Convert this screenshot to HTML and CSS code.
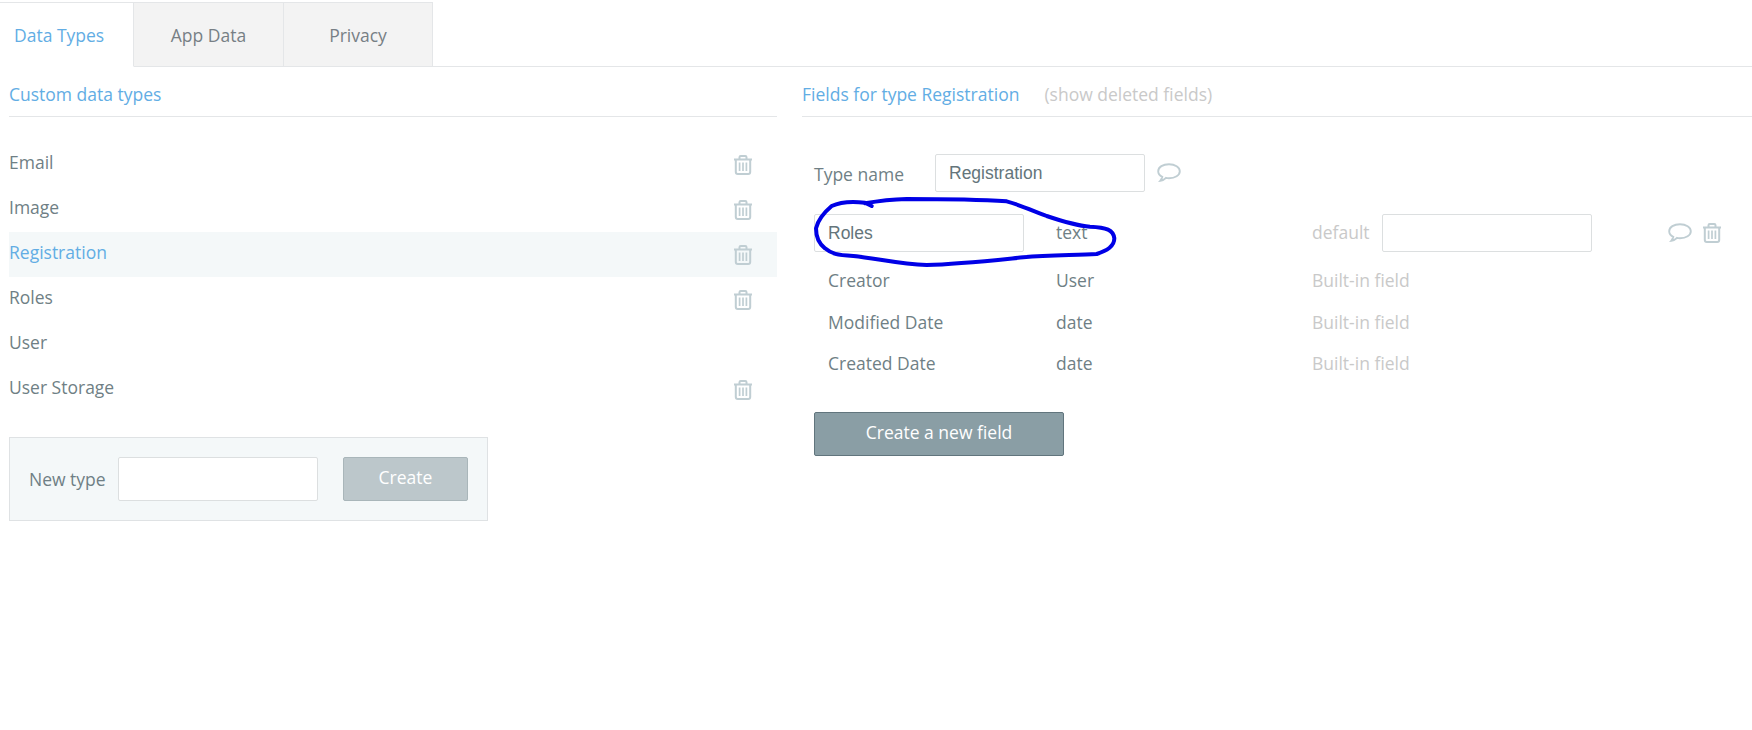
FILE: index.html
```html
<!DOCTYPE html>
<html lang="en">
<head>
<meta charset="utf-8">
<title>Data Types</title>
<link rel="stylesheet" href="styles.css">
</head>
<body>
<svg width="0" height="0" class="defs">
  <symbol id="trash" viewBox="0 0 18 20">
    <path d="M0 4.500h18M5.500 4.500V2.200Q5.500 1 6.700 1h4.600q1.200 0 1.200 1.200v2.300M1.800 4.500V17q0 2 2 2h10.400q2 0 2-2V4.500" fill="none" stroke="currentColor" stroke-width="2"/>
    <path d="M5.600 7.500v8.500M9 7.500v8.500M12.400 7.500v8.500" fill="none" stroke="currentColor" stroke-width="1.700"/>
  </symbol>
  <symbol id="comment" viewBox="0 0 24 20">
    <path d="M12 1.200C6 1.200 1.200 4.100 1.200 8.200c0 2.400 1.600 4.400 4.100 5.600-.3 1.500-1 2.800-2 4 2.300-.3 4.300-1.400 5.700-2.900 1 .2 2 .3 3 .3 6 0 10.800-3 10.800-7S18 1.200 12 1.200z" fill="none" stroke="currentColor" stroke-width="1.900"/>
  </symbol>
</svg>
<nav class="tabs">
  <div class="tab tab-active">Data Types</div>
  <div class="tab tab-app">App Data</div>
  <div class="tab tab-privacy">Privacy</div>
</nav>
<main class="columns">
  <section class="left">
    <h2 class="head">Custom data types</h2>
    <ul class="types">
      <li class="type"><span>Email</span><svg class="trash"><use href="#trash"/></svg></li>
      <li class="type"><span>Image</span><svg class="trash"><use href="#trash"/></svg></li>
      <li class="type type-active"><span>Registration</span><svg class="trash"><use href="#trash"/></svg></li>
      <li class="type"><span>Roles</span><svg class="trash"><use href="#trash"/></svg></li>
      <li class="type"><span>User</span></li>
      <li class="type"><span>User Storage</span><svg class="trash"><use href="#trash"/></svg></li>
    </ul>
    <form class="new-type">
      <label class="new-label">New type</label>
      <input class="field new-input" type="text">
      <button type="button" class="btn btn-create">Create</button>
    </form>
  </section>
  <section class="right">
    <h2 class="head"><span>Fields for type Registration</span><span class="deleted">(show deleted fields)</span></h2>
    <div class="name-row">
      <label class="name-label">Type name</label>
      <input class="field name-input" type="text" value="Registration">
      <svg class="comment"><use href="#comment"/></svg>
    </div>
    <div class="row row-edit">
      <input class="field roles-input" type="text" value="Roles">
      <span class="ftype">text</span>
      <span class="muted default">default</span>
      <input class="field default-input" type="text">
      <svg class="comment comment-row"><use href="#comment"/></svg>
      <svg class="trash trash-row"><use href="#trash"/></svg>
    </div>
    <div class="row"><span class="fname">Creator</span><span class="ftype">User</span><span class="muted">Built-in field</span></div>
    <div class="row"><span class="fname">Modified Date</span><span class="ftype">date</span><span class="muted">Built-in field</span></div>
    <div class="row"><span class="fname">Created Date</span><span class="ftype">date</span><span class="muted">Built-in field</span></div>
    <button type="button" class="btn btn-field">Create a new field</button>
  </section>
</main>
<svg class="scribble" viewBox="0 0 1200 450">
  <path d="M245 228L225 218C190 214 150 216 125 228C105 245 85 265 78 295C78 320 85 340 105 355C125 372 140 375 190 378C260 385 330 403 410 405C500 403 600 392 700 382C780 375 860 376 920 372C950 362 973 350 973 325C970 300 950 292 900 290C860 287 820 275 770 258C730 243 690 225 650 214C560 208 440 207 350 207C310 208 270 212 225 220" fill="none" stroke="#0000e6" stroke-width="12" stroke-linecap="round" stroke-linejoin="round"/>
</svg>
</body>
</html>
```

FILE: styles.css
```css
* { box-sizing: border-box; }
html, body { margin: 0; padding: 0; }
body {
  position: relative;
  height: 730px;
  overflow: hidden;
  background: #fff;
  font-family: "Open Sans", sans-serif;
  font-size: 17.5px;
  color: #6f7f85;
}
.defs { position: absolute; }
.tabs {
  display: flex;
  height: 67px;
  padding-top: 2px;
  border-bottom: 1px solid #e4e6e8;
}
.tab {
  height: 65px;
  margin-bottom: -1px;
  display: flex;
  align-items: center;
  justify-content: center;
  background: #f3f3f3;
  border: 1px solid #e4e6e8;
  border-left: 0;
  color: #777f85;
}
.tab-active {
  width: 134px;
  justify-content: flex-start;
  padding-left: 14px;
  background: #fff;
  color: #62ade4;
  border-bottom-color: #fff;
}
.tab-app { width: 150px; }
.tab-privacy { width: 149px; }
.columns { display: flex; }
.left { width: 768px; margin-left: 9px; flex: none; }
.right { flex: 1; margin-left: 25px; }
.head {
  display: flex;
  height: 50px;
  margin: 0;
  padding-top: 15px;
  border-bottom: 1px solid #e4e6e8;
  font-size: 17.5px;
  font-weight: 400;
  line-height: 24px;
  color: #62ade4;
}
.deleted { margin-left: 25px; color: #c9c9c9; }
.types { list-style: none; margin: 25px 0 0; padding: 0; }
.type {
  height: 45px;
  display: flex;
  align-items: center;
  justify-content: space-between;
  padding-right: 25px;
  padding-bottom: 5px;
}
.type-active { background: #f4f8f9; color: #62ade4; }
.type .trash { margin-top: 5px; }
.trash { width: 18px; height: 20px; color: #c0ced3; }
.comment { width: 24px; height: 20px; color: #c0ced3; }
.new-type {
  display: flex;
  align-items: center;
  width: 479px;
  height: 84px;
  margin-top: 25px;
  padding-left: 19px;
  background: #f4f8f9;
  border: 1px solid #dfe2e4;
}
.new-label { width: 89px; flex: none; }
.field {
  height: 44px;
  padding: 0 13px;
  background: #fff;
  border: 1px solid #dcdfe0;
  border-radius: 2px;
  font-family: "Liberation Sans", Arial, sans-serif;
  font-size: 17.5px;
  color: #64757b;
  outline: none;
}
.new-input { width: 200px; }
.btn {
  height: 44px;
  padding: 0 0 5px;
  border-radius: 2px;
  font-family: "Open Sans", sans-serif;
  font-size: 17.5px;
  color: #fff;
}
.btn-create {
  width: 125px;
  margin-left: 25px;
  background: #bcc7cb;
  border: 1px solid #a9b6ba;
}
.name-row {
  display: flex;
  align-items: center;
  margin: 37px 0 0 12px;
  height: 38px;
}
.name-label { width: 121px; flex: none; padding-top: 2px; }
.name-input { width: 210px; height: 38px; }
.name-row .comment { margin-left: 12px; }
.row {
  display: flex;
  align-items: center;
  height: 41.5px;
  margin-left: 12px;
  padding-left: 14px;
  padding-bottom: 1px;
}
.row-edit { height: 38px; margin-top: 22px; margin-bottom: 8px; padding: 0; }
.roles-input { width: 210px; height: 38px; flex: none; }
.fname { width: 228px; flex: none; }
.ftype { width: 256px; flex: none; }
.row-edit .ftype { margin-left: 32px; padding-bottom: 2px; }
.default { width: 70px; flex: none; padding-bottom: 3px; }
.muted { color: #c9c9c9; }
.default-input { width: 210px; height: 38px; flex: none; }
.comment-row { margin-left: 76px; }
.trash-row { margin-left: 11px; }
.btn-field {
  display: block;
  width: 250px;
  margin: 27.5px 0 0 12px;
  background: #8a9ea5;
  border: 1px solid #61757d;
}
.scribble {
  position: absolute;
  left: 790px;
  top: 130px;
  width: 400px;
  height: 150px;
}
```
